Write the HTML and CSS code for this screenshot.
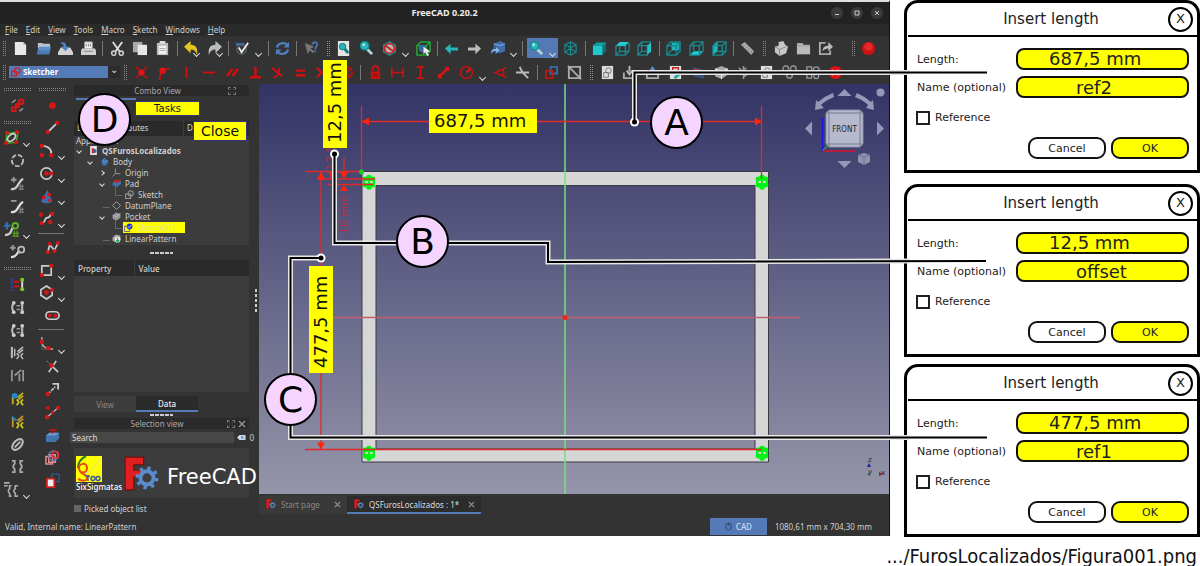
FILE: index.html
```html
<!DOCTYPE html>
<html lang="en">
<head>
<meta charset="utf-8">
<title>FreeCAD 0.20.2</title>
<link rel="stylesheet" href="styles.css">
</head>
<body>
<svg class="sprite" aria-hidden="true">
  <symbol id="new" viewBox="0 0 16 16"><path d="M2 1h9l3 3v11H2z" fill="#e8e8e8"/><path d="M11 1l3 3h-3z" fill="#aaa"/></symbol>
  <symbol id="open" viewBox="0 0 16 16"><path d="M2 2h5l1 1h7v5H2z" fill="#b9c4cf"/><path d="M1 14l2-8h13l-2 8z" fill="#5d8fc9"/><path d="M1 14l1-4h13l-1 4z" fill="#4a79b5"/></symbol>
  <symbol id="save" viewBox="0 0 16 16"><path d="M3 7h10l3 5v3H0v-3z" fill="#d4d4d4"/><path d="M2 2c4-2 7 0 7 4h3l-4 5-5-5h3c0-2-1-3-4-4z" fill="#4f86c6"/></symbol>
  <symbol id="print" viewBox="0 0 16 16"><path d="M4 1h8v7H4z" fill="#f2f2f2" stroke="#aaa"/><path d="M1 8h14l1 3v4H0v-4z" fill="#d2d2d2"/><path d="M3 11h10M6 3v3m2-3v3m2-3v3" stroke="#888"/></symbol>
  <symbol id="cut" viewBox="0 0 16 16"><path d="M3 1l7 10M13 1L6 11" stroke="#ddd" stroke-width="2"/><g fill="none" stroke="#ccc" stroke-width="1.7"><circle cx="4" cy="13" r="2.2"/><circle cx="12" cy="13" r="2.2"/></g></symbol>
  <symbol id="copy" viewBox="0 0 16 16"><path d="M1 1h10v11H1z" fill="#aaa"/><path d="M6 4h10v11H6z" fill="#e6e6e6"/></symbol>
  <symbol id="paste" viewBox="0 0 16 16"><path d="M2 2h12v13H2z" fill="#bbb"/><path d="M5 0h6v3H5z" fill="#ddd"/><path d="M4 5h8v9H4z" fill="#f1f1f1"/><path d="M5 8h6m-6 2h6" stroke="#aaa"/></symbol>
  <symbol id="undo" viewBox="0 0 16 16"><path d="M0 6l7-6v4c6 0 8 4 7 11-1-4-3-6-7-6v4z" fill="#e3c71d"/></symbol>
  <symbol id="redo" viewBox="0 0 16 16"><path d="M16 6L9 0v4c-6 0-8 4-7 11 1-4 3-6 7-6v4z" fill="#b8bdbd"/></symbol>
  <symbol id="check" viewBox="0 0 16 16"><path d="M1 2h9v3H1z" fill="#3a6ea5"/><circle cx="7" cy="9" r="5" fill="none" stroke="#51606c" stroke-width="1.5"/><path d="M4 7l3 5 7-10" fill="none" stroke="#e8e8e8" stroke-width="2"/></symbol>
  <symbol id="refresh" viewBox="0 0 16 16"><path d="M2 7c1-5 8-6 11-3M14 9c-1 5-8 6-11 3" fill="none" stroke="#4e80bd" stroke-width="2.4"/><path d="M15 1v6H9zM1 15V9h6z" fill="#4e80bd"/></symbol>
  <symbol id="help" viewBox="0 0 16 16"><path d="M1 2l3 12 2-4 4 3 1-2-4-3 4-2z" fill="#777"/><path d="M9 4c0-4 6-3 5 0 0 2-2 2-2 5m0 1v2" fill="none" stroke="#4876ad" stroke-width="2"/></symbol>
  <symbol id="fitall" viewBox="0 0 16 16"><path d="M2 0h12v16H2z" fill="#e4e4e4"/><path d="M9 8l4 5" stroke="#137b80" stroke-width="3"/><circle cx="7" cy="6" r="3.5" fill="#25b5bb" stroke="#0f7f84"/></symbol>
  <symbol id="zoomsel" viewBox="0 0 16 16"><path d="M8 8l6 6" stroke="#b7d6d8" stroke-width="3"/><circle cx="6" cy="5" r="4.5" fill="#27b7bd" stroke="#11898e" stroke-width="1.5"/><circle cx="5" cy="4" r="1.5" fill="#b4e7e9"/></symbol>
  <symbol id="nodraw" viewBox="0 0 16 16"><path d="M8 0l7 4v8l-7 4-7-4V4z" fill="#1c8c91"/><circle cx="8" cy="8" r="5.2" fill="#b8b8b8" stroke="#c22" stroke-width="2"/><path d="M4 5l8 6" stroke="#c22" stroke-width="2"/></symbol>
  <symbol id="bbox" viewBox="0 0 16 16"><path d="M1 5l4-4h10v10l-4 4H1zM1 5h10v10M11 5l4-4" fill="none" stroke="#21a634" stroke-width="1.6"/><circle cx="7" cy="8" r="4" fill="#376ba5"/><path d="M8 6l7 5-3 1 2 3-2 1-2-4-2 2z" fill="#eee"/></symbol>
  <symbol id="left" viewBox="0 0 16 16"><path d="M1 8l6-5v4h8v3H7v4z" fill="#28b5b9"/></symbol>
  <symbol id="right" viewBox="0 0 16 16"><path d="M15 8L9 3v4H1v3h8v4z" fill="#bcbcbc"/></symbol>
  <symbol id="linkgo" viewBox="0 0 16 16"><path d="M4 3l7-3 5 3v8l-6 2-6-3z" fill="#426fa8"/><path d="M4 3l6 2 6-2" stroke="#7faee0" fill="none"/><path d="M1 14c0-5 2-6 5-6V5l5 5-5 4v-3c-3 0-3 1-5 3z" fill="#89b6e4" stroke="#2d5689"/></symbol>
  <symbol id="wire" viewBox="0 0 16 16"><path d="M8 1l6 3v8l-6 3-6-3V4zM2 4l6 3 6-3M8 7v8M8 1v6M2 12l6-4 6 4" fill="none" stroke="#178f94" stroke-width="1.2"/></symbol>
  <symbol id="cubef" viewBox="0 0 16 16"><path d="M1 4l4-3h10v10l-4 4H1z" fill="#107276"/><path d="M1 5h10v10H1z" fill="#20c7cd"/><path d="M1 5l4-3h10l-4 3z" fill="#189da2"/></symbol>
  <symbol id="cubet" viewBox="0 0 16 16"><path d="M1 5h10v10H1zM11 15l4-4V2M1 15l4-4h10M5 11V2" fill="none" stroke="#168a8f" stroke-width="1.4"/><path d="M1 5l4-4h10l-4 4z" fill="#22ccd2"/></symbol>
  <symbol id="cuber" viewBox="0 0 16 16"><path d="M1 5h10v10H1zM1 5l4-4h10M1 15l4-4h6M5 11V1" fill="none" stroke="#168a8f" stroke-width="1.4"/><path d="M11 5l4-4v10l-4 4z" fill="#22c4ca"/></symbol>
  <symbol id="cubeb" viewBox="0 0 16 16"><path d="M6 2h8v8H6z" fill="#20b4ba"/><path d="M1 5l4-4h10v10l-4 4H1zM1 5h10v10M11 5l4-4M1 15l5-5" fill="none" stroke="#168a8f" stroke-width="1.5"/></symbol>
  <symbol id="cubed" viewBox="0 0 16 16"><path d="M1 15l4-4h10l-4 4z" fill="#22ccd2"/><path d="M1 5l4-4h10v10l-4 4H1zM1 5h10v10M11 5l4-4M5 1v10" fill="none" stroke="#168a8f" stroke-width="1.4"/></symbol>
  <symbol id="cubel" viewBox="0 0 16 16"><path d="M1 5l5-4v10l-5 4z" fill="#22b6bc"/><path d="M1 5l4-4h10v10l-4 4H1zM1 5h10v10M11 5l4-4M5 11h10" fill="none" stroke="#168a8f" stroke-width="1.4"/></symbol>
  <symbol id="ruler" viewBox="0 0 16 16"><path d="M1 4l4-3 10 10-3 4z" fill="#aaa"/><path d="M5 4l-2 2m5 0L6 8m4 0l-2 3m5-1l-2 3" stroke="#777"/></symbol>
  <symbol id="part" viewBox="0 0 16 16"><path d="M2 6l4-1V1l5-1 2 4 3 2-2 7-7 3-5-4z" fill="#c6c6c6"/><path d="M2 6l5 3 7-3M7 9v6" stroke="#888" fill="none"/></symbol>
  <symbol id="folder" viewBox="0 0 16 16"><path d="M1 2h6l1 2h7v10H1z" fill="#a9a9a9"/><path d="M1 6h14v8H1z" fill="#bababa"/></symbol>
  <symbol id="export" viewBox="0 0 16 16"><path d="M8 2H2v12h11v-4" fill="none" stroke="#aaa" stroke-width="2"/><path d="M5 11c0-5 3-6 6-6V1l5 5-5 5V8c-3 0-4 1-6 3z" fill="#bbb"/></symbol>
  <symbol id="rec" viewBox="0 0 16 16"><circle cx="8" cy="8" r="7" fill="#c91313"/><circle cx="8" cy="6" r="4.5" fill="#e22a2a"/></symbol>
  <symbol id="coinc" viewBox="0 0 16 16"><path d="M2 2l3 3m6 6l3 3m0-12l-3 3m-6 6l-3 3" stroke="#b81212" stroke-width="2"/><circle cx="8" cy="8" r="3.4" fill="#e01414"/></symbol>
  <symbol id="ponobj" viewBox="0 0 16 16"><path d="M3 16c0-8 4-12 11-12" fill="none" stroke="#b31414" stroke-width="2.3"/><circle cx="6" cy="6" r="3.4" fill="#e01414"/></symbol>
  <symbol id="vert" viewBox="0 0 16 16"><path d="M8 2v12" stroke="#cf1010" stroke-width="2"/></symbol>
  <symbol id="horiz" viewBox="0 0 16 16"><path d="M1 8h13" stroke="#cf1010" stroke-width="2"/></symbol>
  <symbol id="paral" viewBox="0 0 16 16"><path d="M2 12l6-8M8 12l6-8" stroke="#cf1010" stroke-width="2.6"/></symbol>
  <symbol id="perp" viewBox="0 0 16 16"><path d="M8 2v11M2 13h12" stroke="#cf1010" stroke-width="2.6"/></symbol>
  <symbol id="tang" viewBox="0 0 16 16"><path d="M2 3l11 9M4 13c5-1 7-5 5-10" fill="none" stroke="#cf1010" stroke-width="2.2"/></symbol>
  <symbol id="equal" viewBox="0 0 16 16"><path d="M3 6h10M3 11h10" stroke="#cf1010" stroke-width="2.6"/></symbol>
  <symbol id="symm" viewBox="0 0 16 16"><path d="M1 3l5 5-5 5M15 3l-5 5 5 5" fill="none" stroke="#cf1010" stroke-width="2.4"/></symbol>
  <symbol id="block" viewBox="0 0 16 16"><path d="M3 3l10 10M13 3L3 13" stroke="#b51212" stroke-width="1.8"/><circle cx="8" cy="8" r="6" fill="none" stroke="#b51212" stroke-width="1.8"/></symbol>
  <symbol id="lock" viewBox="0 0 16 16"><path d="M3 7h10v8H3z" fill="#c71212"/><path d="M5 7V4c0-4 6-4 6 0v3" fill="none" stroke="#c71212" stroke-width="2"/><path d="M5 10h6m-6 2h6" stroke="#8d1010"/></symbol>
  <symbol id="dimh" viewBox="0 0 16 16"><path d="M2 3v10M14 3v10M2 8h12" stroke="#cf1010" stroke-width="1.8"/></symbol>
  <symbol id="dimv" viewBox="0 0 16 16"><path d="M4 2h8M4 14h8M8 2v12" stroke="#cf1010" stroke-width="1.8"/></symbol>
  <symbol id="dist" viewBox="0 0 16 16"><path d="M3 13L13 3" stroke="#e01414" stroke-width="2.6"/><path d="M9 2h5v5zM2 9v5h5z" fill="#e01414"/></symbol>
  <symbol id="radius" viewBox="0 0 16 16"><circle cx="8" cy="8" r="6.3" fill="none" stroke="#c01212" stroke-width="1.7"/><path d="M8 8l4-4" stroke="#e01414" stroke-width="2.4"/></symbol>
  <symbol id="angle" viewBox="0 0 16 16"><path d="M14 3L2 8l12 5M10 5c2 2 2 4 0 6" fill="none" stroke="#c81212" stroke-width="1.7"/></symbol>
  <symbol id="snell" viewBox="0 0 16 16"><path d="M1 8h14M5 2l3 6 6 6" stroke="#bbb" stroke-width="2" fill="none"/></symbol>
  <symbol id="driving" viewBox="0 0 16 16"><path d="M7 2h7v7H7z" fill="none" stroke="#396ba5" stroke-width="2"/><path d="M2 6h7v8H2z" fill="none" stroke="#be1616" stroke-width="2"/></symbol>
  <symbol id="active" viewBox="0 0 16 16"><path d="M2 2h12v12H2zM1 1l14 14" fill="none" stroke="#aaa" stroke-width="2"/></symbol>
  <symbol id="sketch" viewBox="0 0 16 16"><path d="M2 1h12v14H2z" fill="#ddd"/><path d="M4 8h5v5H4z" fill="none" stroke="#777"/><circle cx="9" cy="6" r="3" fill="none" stroke="#777"/></symbol>
  <symbol id="tray" viewBox="0 0 16 16"><path d="M2 8v6h12V8" fill="none" stroke="#aaa" stroke-width="2"/><path d="M8 1v6m-3-1l3 4 3-4" stroke="#bbb" stroke-width="2" fill="none"/></symbol>
  <symbol id="trayup" viewBox="0 0 16 16"><path d="M2 8v6h12V8" fill="none" stroke="#aaa" stroke-width="2"/><path d="M8 1l4 6H4z" fill="#5e91cf"/></symbol>
  <symbol id="view" viewBox="0 0 16 16"><path d="M2 1h12v14H2z" fill="#ddd"/><path d="M5 3h6v5H5z" fill="none" stroke="#c22" stroke-width="1.5"/><path d="M7 14l6-5" stroke="#28a5aa" stroke-width="3"/></symbol>
  <symbol id="map" viewBox="0 0 16 16"><path d="M2 2l12 3v10L2 12z" fill="#32507f"/><path d="M4 5h4v5H4zM9 7h3v4" fill="none" stroke="#c33" stroke-width="1.5"/></symbol>
  <symbol id="reorient" viewBox="0 0 16 16"><path d="M1 4l7-3 7 3v6l-7 5-7-3z" fill="#aaa"/><path d="M1 4l7 3 7-3M8 7v8" stroke="#eee" fill="none"/></symbol>
  <symbol id="validate" viewBox="0 0 16 16"><path d="M1 6h5m2 0h6M8 1v5m0 3v6M3 3l3 3m7 3l-5 4m3-10l-3 3" stroke="#999" stroke-width="1.6"/></symbol>
  <symbol id="merge" viewBox="0 0 16 16"><g fill="none" stroke="#888" stroke-width="1.8"><circle cx="4" cy="4" r="3"/><circle cx="12" cy="4" r="3"/><circle cx="8" cy="11" r="3"/></g></symbol>
  <symbol id="mirror" viewBox="0 0 16 16"><path d="M2 2h5v12H2z" fill="none" stroke="#999" stroke-width="1.4"/><circle cx="12" cy="5" r="3" fill="none" stroke="#999" stroke-width="1.4"/><circle cx="12" cy="12" r="2.5" fill="none" stroke="#999" stroke-width="1.4"/></symbol>
  <symbol id="stop" viewBox="0 0 16 16"><circle cx="8" cy="8" r="7" fill="#dc1111"/><path d="M5 5v6m6-6v6M5 8h6" stroke="#fff" stroke-width="1.6"/></symbol>
  <symbol id="clone" viewBox="0 0 16 16"><path d="M2 5l4-3M10 14l4-3" stroke="#999" stroke-width="1.5"/><g fill="none" stroke="#e01414" stroke-width="2"><circle cx="12" cy="4" r="2.4"/><circle cx="8" cy="8" r="1.8"/><path d="M2 10h4v4H2z"/></g></symbol>
  <symbol id="bspl" viewBox="0 0 16 16"><path d="M3 4l12-2-2 11-11 1z" fill="none" stroke="#43a820" stroke-width="1.6"/><ellipse cx="8" cy="8" rx="5" ry="3" transform="rotate(-40 8 8)" fill="none" stroke="#ccc" stroke-width="2"/><g fill="#e01414"><circle cx="3" cy="3" r="2"/><circle cx="14" cy="2" r="2"/><circle cx="13" cy="13" r="2"/><circle cx="2" cy="14" r="2"/></g></symbol>
  <symbol id="circdash" viewBox="0 0 16 16"><circle cx="8" cy="8" r="6" fill="none" stroke="#bbb" stroke-width="2" stroke-dasharray="5 2"/></symbol>
  <symbol id="degup" viewBox="0 0 16 16"><path d="M1 4h6M4 1v6" stroke="#999" stroke-width="2"/><path d="M1 14c8 1 7-8 13-11" fill="none" stroke="#ccc" stroke-width="2.4"/><path d="M9 11h6m-6 3h6m-4-5v6m2-6v6" stroke="#888"/></symbol>
  <symbol id="degdn" viewBox="0 0 16 16"><path d="M1 2h6" stroke="#999" stroke-width="2"/><path d="M1 14c8 1 7-8 13-11" fill="none" stroke="#ddd" stroke-width="2.4"/><path d="M9 11h6m-6 3h6m-4-5v6m2-6v6" stroke="#888"/></symbol>
  <symbol id="knot" viewBox="0 0 16 16"><path d="M0 4h7M3 0v8" stroke="#3b74b4" stroke-width="2"/><path d="M1 14c7 0 6-5 9-9" fill="none" stroke="#ccc" stroke-width="2.4"/><circle cx="12" cy="4" r="3" fill="none" stroke="#62b327" stroke-width="2"/><path d="M9 12h7m-7 3h7m-5-6v7m3-7v7" stroke="#62b327"/></symbol>
  <symbol id="knot2" viewBox="0 0 16 16"><path d="M0 4h6M3 1v6" stroke="#999" stroke-width="2"/><path d="M1 14c7 0 6-5 9-7" fill="none" stroke="#ddd" stroke-width="2.4"/><circle cx="12" cy="6" r="3.2" fill="none" stroke="#bbb" stroke-width="2"/></symbol>
  <symbol id="assoc" viewBox="0 0 16 16"><path d="M2 1v14" stroke="#2c3f91" stroke-width="3" stroke-dasharray="3 1"/><path d="M4 5h6m-6 5h6" stroke="#d01414" stroke-width="2"/><path d="M13 3v10" stroke="#ddd" stroke-width="2"/><circle cx="13" cy="3" r="2.2" fill="#7ccb25"/><circle cx="13" cy="13" r="2.2" fill="#7ccb25"/></symbol>
  <symbol id="sel1" viewBox="0 0 16 16"><path d="M4 3c-2 3-2 7 0 10M13 3v10" fill="none" stroke="#bbb" stroke-width="2.2"/><path d="M7 6h4m-4 4h4" stroke="#999" stroke-width="1.6"/><g fill="#ccc"><circle cx="4" cy="3" r="2"/><circle cx="4" cy="13" r="2"/><circle cx="13" cy="3" r="2"/><circle cx="13" cy="13" r="2"/></g></symbol>
  <symbol id="sel2" viewBox="0 0 16 16"><path d="M2 2v12" stroke="#bbb" stroke-width="2.2"/><path d="M5 4v8M14 2l-6 5M14 5l-5 4M7 9c3 2 3 3 0 6M14 9c-3 2-3 3 0 6" fill="none" stroke="#bbb" stroke-width="1.6"/></symbol>
  <symbol id="sel3" viewBox="0 0 16 16"><path d="M2 2v12M14 2v12M12 2L5 8m5-2v8" fill="none" stroke="#999" stroke-width="1.8"/></symbol>
  <symbol id="sel4" viewBox="0 0 16 16"><path d="M3 4v10M14 2l-6 5M14 5l-5 4" stroke="#b9ac20" stroke-width="2"/><path d="M7 9c3 2 3 3 0 6M14 9c-3 2-3 3 0 6" fill="none" stroke="#cfc51e" stroke-width="2"/><circle cx="5" cy="5" r="3" fill="#2586cb"/></symbol>
  <symbol id="sel5" viewBox="0 0 16 16"><path d="M3 4v10M14 2l-6 5M14 5l-5 4" stroke="#b9902a" stroke-width="2"/><path d="M7 9c3 2 3 3 0 6M14 9c-3 2-3 3 0 6" fill="none" stroke="#cfc51e" stroke-width="2"/><path d="M2 3l5 4" stroke="#2586cb" stroke-width="2"/></symbol>
  <symbol id="ellip" viewBox="0 0 16 16"><ellipse cx="8" cy="8" rx="7" ry="4" transform="rotate(-45 8 8)" fill="none" stroke="#bbb" stroke-width="2.2"/><path d="M5 11l6-6" stroke="#bbb" stroke-width="2"/></symbol>
  <symbol id="brack" viewBox="0 0 16 16"><path d="M2 2h3v3c-2 2-2 4 0 6v3H2M14 2h-3v3c2 2 2 4 0 6v3h3" fill="none" stroke="#aaa" stroke-width="2"/></symbol>
  <symbol id="brack2" viewBox="0 0 16 16"><path d="M0 1h6M0 4h4M8 4H6v3c-2 2-2 3 0 5v3h2M15 4h-3v3c-2 2-2 3 0 5v3h3" fill="none" stroke="#aaa" stroke-width="1.8"/></symbol>
  <symbol id="point" viewBox="0 0 16 16"><circle cx="8" cy="8" r="3.6" fill="#d81414"/></symbol>
  <symbol id="line" viewBox="0 0 16 16"><path d="M3 13L13 3" stroke="#ccc" stroke-width="2"/><g fill="#d81414"><circle cx="3" cy="13" r="2.3"/><circle cx="13" cy="3" r="2.3"/></g></symbol>
  <symbol id="arc" viewBox="0 0 16 16"><path d="M3 3c7 0 11 4 10 9" fill="none" stroke="#ccc" stroke-width="1.8"/><g fill="#d81414"><circle cx="3" cy="3" r="2.4"/><circle cx="3" cy="13" r="2.4"/><circle cx="13" cy="13" r="2.4"/></g></symbol>
  <symbol id="circle" viewBox="0 0 16 16"><circle cx="8" cy="8" r="6" fill="none" stroke="#ccc" stroke-width="1.8"/><g fill="#d81414"><circle cx="8" cy="8" r="2.4"/><circle cx="13" cy="8" r="2.2"/></g></symbol>
  <symbol id="conic" viewBox="0 0 16 16"><path d="M9 1l5 12c-3 3-9 3-12 0z" fill="#3d6eaa"/><g fill="#d81414"><circle cx="5" cy="9" r="2"/><circle cx="11" cy="6" r="2"/><circle cx="11" cy="12" r="1.6"/></g></symbol>
  <symbol id="bcurve" viewBox="0 0 16 16"><path d="M3 13c5-1 2-6 6-6s2-3 4-4" fill="none" stroke="#ccc" stroke-width="1.8"/><g fill="#d81414"><circle cx="2" cy="4" r="2.3"/><circle cx="3" cy="13" r="2.3"/><circle cx="12" cy="12" r="2.3"/><circle cx="14" cy="3" r="2.3"/></g></symbol>
  <symbol id="poly" viewBox="0 0 16 16"><path d="M3 13l2-8 5 6 4-8" fill="none" stroke="#ccc" stroke-width="1.8"/><g fill="#d81414"><circle cx="3" cy="13" r="2.2"/><circle cx="5" cy="4" r="2"/><circle cx="10" cy="12" r="2.2"/><circle cx="14" cy="3" r="2.2"/></g></symbol>
  <symbol id="rect" viewBox="0 0 16 16"><path d="M3 3h10v10H3z" fill="none" stroke="#ccc" stroke-width="1.8"/><g fill="#d81414"><circle cx="13" cy="3" r="2.3"/><circle cx="3" cy="13" r="2.3"/></g></symbol>
  <symbol id="hex" viewBox="0 0 16 16"><path d="M8 1l6 4v6l-6 4-6-4V5z" fill="none" stroke="#ccc" stroke-width="1.8"/><g fill="#d81414"><circle cx="8" cy="8" r="2.6"/><circle cx="14" cy="5" r="2.2"/></g></symbol>
  <symbol id="slot" viewBox="0 0 16 16"><rect x="1" y="4" width="14" height="8" rx="4" fill="none" stroke="#ccc" stroke-width="1.8"/><g fill="#d81414"><circle cx="5" cy="8" r="2"/><circle cx="11" cy="8" r="2"/></g></symbol>
  <symbol id="fillet" viewBox="0 0 16 16"><path d="M3 0v5c0 5 3 7 12 8" fill="none" stroke="#aaa" stroke-width="1.6"/><path d="M3 6v7h6" fill="none" stroke="#777" stroke-dasharray="2 1"/><g fill="#d81414"><circle cx="3" cy="5" r="2.4"/><circle cx="10" cy="12" r="2.4"/></g></symbol>
  <symbol id="trim" viewBox="0 0 16 16"><path d="M12 2L4 14M7 7l7 7" stroke="#ccc" stroke-width="1.8"/><path d="M2 2l5 5" stroke="#888" stroke-dasharray="2 1"/><circle cx="7" cy="7" r="2.4" fill="#d81414"/></symbol>
  <symbol id="extend" viewBox="0 0 16 16"><path d="M3 13l8-8" stroke="#bbb" stroke-width="1.8" stroke-dasharray="4 1"/><path d="M8 2h6v6" fill="none" stroke="#ccc" stroke-width="2"/><circle cx="3" cy="13" r="2.5" fill="#d81414"/></symbol>
  <symbol id="split" viewBox="0 0 16 16"><path d="M2 13L14 3" stroke="#bbb" stroke-width="1.5"/><g fill="#d81414"><circle cx="2" cy="13" r="2.3"/><circle cx="14" cy="3" r="2.3"/><circle cx="3" cy="3" r="2"/><circle cx="8" cy="8" r="1.8"/></g></symbol>
  <symbol id="extgeo" viewBox="0 0 16 16"><path d="M1 8l4-3h10v6l-4 4H1z" fill="#4474ae"/><path d="M1 8h10l4-3H5z" fill="#6e9bd2"/><path d="M4 2h9M8 1v5" stroke="#c01414" stroke-width="1.6"/></symbol>
  <symbol id="carbon" viewBox="0 0 16 16"><g fill="none" stroke-width="1.6"><path d="M4 5h7v8H4zM1 7h7v8H1z" stroke="#e58b8b"/><circle cx="9" cy="6" r="5" stroke="#6275b5"/><circle cx="11" cy="5" r="3.5" stroke="#d33"/></g></symbol>
  <symbol id="constr" viewBox="0 0 16 16"><path d="M7 1h8v8H7z" fill="none" stroke="#2e5fa0" stroke-width="1.6" stroke-dasharray="3 1"/><path d="M2 6h8v9H2z" fill="#eee" stroke="#c22" stroke-width="2"/></symbol>
  <symbol id="logo" viewBox="0 0 32 32"><path d="M1 1h17v7H9v5h7v6H9v12H1z" fill="#e02020" stroke="#6c1010"/><g fill="none" stroke="#5a8ccc"><circle cx="21" cy="20" r="6" stroke-width="3.6"/><circle cx="21" cy="20" r="9" stroke-width="3" stroke-dasharray="3.1 3.970"/></g></symbol>
  <symbol id="docic" viewBox="0 0 16 16"><path d="M2 0h12v16H2z" fill="#e5e5e5"/><path d="M5 4h4v9H5z" fill="#d22"/><circle cx="10" cy="9" r="3.5" fill="#3668a5"/></symbol>
  <symbol id="body" viewBox="0 0 16 16"><path d="M3 6l2-3 4-2 1 3 4 2v6l-6 4-5-3z" fill="#3f73b2"/><path d="M3 6l5 3 6-3" stroke="#87b1e2" fill="none"/></symbol>
  <symbol id="origin" viewBox="0 0 16 16"><path d="M6 1v9h9M6 10l-5 5" fill="none" stroke="#999" stroke-width="1.6"/></symbol>
  <symbol id="pad" viewBox="0 0 16 16"><path d="M1 7l7-5 8 2v5l-7 5-8-3z" fill="#3f73b2"/><path d="M1 5l7-4 8 2-7 4z" fill="#c92222"/></symbol>
  <symbol id="sk" viewBox="0 0 16 16"><path d="M1 7h9v8H1z" fill="none" stroke="#999" stroke-width="1.8"/><circle cx="10" cy="6" r="4.6" fill="none" stroke="#999" stroke-width="1.8"/></symbol>
  <symbol id="skblue" viewBox="0 0 16 16"><path d="M1 6h9v9H1z" fill="none" stroke="#777" stroke-width="1.8"/><circle cx="10" cy="6" r="5" fill="#1734d8"/><path d="M7 6l2 2 4-4" stroke="#fff" stroke-width="1.5" fill="none"/></symbol>
  <symbol id="plane" viewBox="0 0 16 16"><path d="M8 1l7 7-7 7-7-7z" fill="none" stroke="#aaa" stroke-width="1.6"/></symbol>
  <symbol id="pocket" viewBox="0 0 16 16"><path d="M1 6l6-5 8 2v7l-7 5-7-3z" fill="#999"/><path d="M1 6l7 2 7-5" stroke="#ccc" fill="none"/></symbol>
  <symbol id="linpat" viewBox="0 0 16 16"><path d="M1 6l6-5 8 2v7l-7 5-7-3z" fill="#aaa"/><circle cx="10" cy="10" r="5" fill="#eee"/><path d="M10 6v8m-3-3l3 3 3-3" stroke="#13b13c" stroke-width="2" fill="none"/></symbol>
  <symbol id="float" viewBox="0 0 16 16"><path d="M1 5V1h4M11 1h4v4M15 11v4h-4M5 15H1v-4M5 5h1m4 0h1M5 11h1m4 0h1" fill="none" stroke="#888" stroke-width="2"/></symbol>
  <symbol id="x" viewBox="0 0 16 16"><path d="M2 2l12 12M14 2L2 14" stroke="currentColor" stroke-width="2.4"/></symbol>
  <symbol id="dots" viewBox="0 0 20 20"><g fill="#00f413"><circle cx="10" cy="5.5" r="2.8"/><circle cx="10" cy="15" r="2.8"/><circle cx="6" cy="7" r="2.4"/><circle cx="14" cy="7" r="2.4"/><circle cx="6" cy="13" r="2.4"/><circle cx="14" cy="13" r="2.4"/><path d="M6 6h8v3H6zM6 11h8v3H6z"/><path d="M4 8h2v4H4zM14 8h2v4h-2zM9 8h2v4H9z"/></g></symbol>
</svg>

<div class="page">
<div class="app">
  <header class="titlebar"><h1>FreeCAD 0.20.2</h1>
    <div class="winbtns">
      <button aria-label="Minimize"><svg viewBox="0 0 12 12"><path d="M4 7.500h4" stroke="#ccc"/></svg></button>
      <button aria-label="Maximize"><svg viewBox="0 0 12 12"><path d="M4 4h4v4H4z" fill="none" stroke="#ccc"/></svg></button>
      <button aria-label="Close window"><svg viewBox="0 0 12 12"><path d="M4 4l4 4m0-4L4 8" stroke="#ccc"/></svg></button>
    </div>
  </header>
  <nav class="menubar">
    <button><u>F</u>ile</button><button><u>E</u>dit</button><button><u>V</u>iew</button><button><u>T</u>ools</button><button><u>M</u>acro</button><button><u>S</u>ketch</button><button><u>W</u>indows</button><button><u>H</u>elp</button>
  </nav>
  <div class="toolbar">
    <i class="grip first"></i>
    <button class="tb" aria-label="New"><svg><use href="#new"/></svg></button>
    <button class="tb" aria-label="Open"><svg><use href="#open"/></svg></button>
    <button class="tb" aria-label="Save"><svg><use href="#save"/></svg></button>
    <button class="tb" aria-label="Print"><svg><use href="#print"/></svg></button>
    <i class="sep"></i>
    <button class="tb" aria-label="Cut"><svg><use href="#cut"/></svg></button>
    <button class="tb" aria-label="Copy"><svg><use href="#copy"/></svg></button>
    <button class="tb" aria-label="Paste"><svg><use href="#paste"/></svg></button>
    <i class="sep"></i>
    <button class="tb menu" aria-label="Undo"><svg><use href="#undo"/></svg></button>
    <button class="tb menu" aria-label="Redo"><svg><use href="#redo"/></svg></button>
    <i class="sep"></i>
    <button class="tb wide menu" aria-label="Edit mode"><svg><use href="#check"/></svg></button>
    <i class="sep"></i>
    <button class="tb" aria-label="Refresh"><svg><use href="#refresh"/></svg></button>
    <i class="sep"></i>
    <button class="tb" aria-label="What's this"><svg><use href="#help"/></svg></button>
    <i class="grip"></i>
    <button class="tb" aria-label="Fit all"><svg><use href="#fitall"/></svg></button>
    <button class="tb" aria-label="Fit selection"><svg><use href="#zoomsel"/></svg></button>
    <button class="tb wide menu" aria-label="Draw style"><svg><use href="#nodraw"/></svg></button>
    <button class="tb" aria-label="Bounding box"><svg><use href="#bbox"/></svg></button>
    <i class="sep"></i>
    <button class="tb" aria-label="Back"><svg><use href="#left"/></svg></button>
    <button class="tb" aria-label="Forward"><svg><use href="#right"/></svg></button>
    <button class="tb wide menu" aria-label="Go to linked object"><svg><use href="#linkgo"/></svg></button>
    <i class="sep"></i>
    <button class="tb wide menu on" aria-label="Zoom"><svg><use href="#zoomsel"/></svg></button>
    <button class="tb" aria-label="Isometric"><svg><use href="#wire"/></svg></button>
    <i class="sep"></i>
    <button class="tb" aria-label="Front"><svg><use href="#cubef"/></svg></button>
    <button class="tb" aria-label="Top"><svg><use href="#cubet"/></svg></button>
    <button class="tb" aria-label="Right"><svg><use href="#cuber"/></svg></button>
    <i class="sep"></i>
    <button class="tb" aria-label="Rear"><svg><use href="#cubeb"/></svg></button>
    <button class="tb" aria-label="Bottom"><svg><use href="#cubed"/></svg></button>
    <button class="tb" aria-label="Left"><svg><use href="#cubel"/></svg></button>
    <i class="sep"></i>
    <button class="tb" aria-label="Measure"><svg><use href="#ruler"/></svg></button>
    <i class="grip"></i>
    <button class="tb" aria-label="Part"><svg><use href="#part"/></svg></button>
    <button class="tb" aria-label="Group"><svg><use href="#folder"/></svg></button>
    <button class="tb" aria-label="Link"><svg><use href="#export"/></svg></button>
    <i class="grip far"></i>
    <button class="tb" aria-label="Record macro"><svg><use href="#rec"/></svg></button>
  </div>
  <div class="toolbar">
    <i class="grip first"></i>
    <label class="bench"><svg viewBox="0 0 16 16"><path d="M1 7h8v7H1z" fill="none" stroke="#c22" stroke-width="2"/><circle cx="10" cy="6" r="4.500" fill="none" stroke="#c22" stroke-width="2"/></svg><select aria-label="Workbench"><option>Sketcher</option></select></label>
    <i class="grip"></i>
    <button class="tb" aria-label="Coincident"><svg><use href="#coinc"/></svg></button>
    <button class="tb" aria-label="Point on object"><svg><use href="#ponobj"/></svg></button>
    <button class="tb" aria-label="Vertical"><svg><use href="#vert"/></svg></button>
    <button class="tb" aria-label="Horizontal"><svg><use href="#horiz"/></svg></button>
    <button class="tb" aria-label="Parallel"><svg><use href="#paral"/></svg></button>
    <button class="tb" aria-label="Perpendicular"><svg><use href="#perp"/></svg></button>
    <button class="tb" aria-label="Tangent"><svg><use href="#tang"/></svg></button>
    <button class="tb" aria-label="Equal"><svg><use href="#equal"/></svg></button>
    <button class="tb" aria-label="Symmetric"><svg><use href="#symm"/></svg></button>
    <button class="tb" aria-label="Block"><svg><use href="#block"/></svg></button>
    <i class="sep"></i>
    <button class="tb" aria-label="Lock"><svg><use href="#lock"/></svg></button>
    <button class="tb" aria-label="Horizontal distance"><svg><use href="#dimh"/></svg></button>
    <button class="tb" aria-label="Vertical distance"><svg><use href="#dimv"/></svg></button>
    <button class="tb" aria-label="Distance"><svg><use href="#dist"/></svg></button>
    <button class="tb wide menu" aria-label="Radius"><svg><use href="#radius"/></svg></button>
    <button class="tb" aria-label="Angle"><svg><use href="#angle"/></svg></button>
    <button class="tb" aria-label="Refraction"><svg><use href="#snell"/></svg></button>
    <i class="sep"></i>
    <button class="tb" aria-label="Toggle driving"><svg><use href="#driving"/></svg></button>
    <button class="tb" aria-label="Toggle active"><svg><use href="#active"/></svg></button>
    <i class="grip"></i>
    <button class="tb" aria-label="New sketch"><svg><use href="#sketch"/></svg></button>
    <button class="tb" aria-label="Edit sketch"><svg><use href="#tray"/></svg></button>
    <button class="tb" aria-label="Leave sketch"><svg><use href="#trayup"/></svg></button>
    <button class="tb" aria-label="View sketch"><svg><use href="#view"/></svg></button>
    <button class="tb" aria-label="View section"><svg><use href="#map"/></svg></button>
    <button class="tb" aria-label="Map sketch"><svg><use href="#reorient"/></svg></button>
    <button class="tb" aria-label="Reorient"><svg><use href="#validate"/></svg></button>
    <button class="tb" aria-label="Validate"><svg><use href="#sketch"/></svg></button>
    <button class="tb" aria-label="Merge"><svg><use href="#merge"/></svg></button>
    <button class="tb" aria-label="Mirror"><svg><use href="#mirror"/></svg></button>
    <button class="tb" aria-label="Stop operation"><svg><use href="#stop"/></svg></button>
    <i class="spare"></i>
  </div>

  <div class="work">
    <div class="side">
      <i class="hgrip"></i>
      <button class="tb" aria-label="Clone"><svg><use href="#clone"/></svg></button>
      <i class="hgrip"></i>
      <button class="tb menu" aria-label="Show B-spline"><svg><use href="#bspl"/></svg></button>
      <button class="tb" aria-label="Convert"><svg><use href="#circdash"/></svg></button>
      <button class="tb" aria-label="Increase degree"><svg><use href="#degup"/></svg></button>
      <button class="tb" aria-label="Decrease degree"><svg><use href="#degdn"/></svg></button>
      <button class="tb menu" aria-label="Knot"><svg><use href="#knot"/></svg></button>
      <button class="tb" aria-label="Insert knot"><svg><use href="#knot2"/></svg></button>
      <i class="hgrip"></i>
      <button class="tb" aria-label="Degrees of freedom"><svg><use href="#assoc"/></svg></button>
      <button class="tb" aria-label="Select constraints"><svg><use href="#sel1"/></svg></button>
      <button class="tb" aria-label="Select elements"><svg><use href="#sel1"/></svg></button>
      <button class="tb" aria-label="Redundant"><svg><use href="#sel2"/></svg></button>
      <button class="tb" aria-label="Conflicting"><svg><use href="#sel3"/></svg></button>
      <button class="tb" aria-label="Show geometry"><svg><use href="#sel4"/></svg></button>
      <button class="tb" aria-label="Hide geometry"><svg><use href="#sel5"/></svg></button>
      <button class="tb" aria-label="Ellipse"><svg><use href="#ellip"/></svg></button>
      <button class="tb" aria-label="Symmetry"><svg><use href="#brack"/></svg></button>
      <button class="tb menu" aria-label="Clone array"><svg><use href="#brack2"/></svg></button>
    </div>
    <div class="side second">
      <i class="hgrip"></i>
      <button class="tb" aria-label="Point"><svg><use href="#point"/></svg></button>
      <button class="tb" aria-label="Line"><svg><use href="#line"/></svg></button>
      <button class="tb menu" aria-label="Arc"><svg><use href="#arc"/></svg></button>
      <button class="tb menu" aria-label="Circle"><svg><use href="#circle"/></svg></button>
      <button class="tb menu" aria-label="Conic"><svg><use href="#conic"/></svg></button>
      <button class="tb menu" aria-label="B-spline"><svg><use href="#bcurve"/></svg></button>
      <i class="hsep"></i>
      <button class="tb" aria-label="Polyline"><svg><use href="#poly"/></svg></button>
      <button class="tb menu" aria-label="Rectangle"><svg><use href="#rect"/></svg></button>
      <button class="tb menu" aria-label="Polygon"><svg><use href="#hex"/></svg></button>
      <button class="tb" aria-label="Slot"><svg><use href="#slot"/></svg></button>
      <i class="hsep"></i>
      <button class="tb menu" aria-label="Fillet"><svg><use href="#fillet"/></svg></button>
      <button class="tb" aria-label="Trim"><svg><use href="#trim"/></svg></button>
      <button class="tb" aria-label="Extend"><svg><use href="#extend"/></svg></button>
      <button class="tb" aria-label="Split"><svg><use href="#split"/></svg></button>
      <button class="tb" aria-label="External geometry"><svg><use href="#extgeo"/></svg></button>
      <button class="tb" aria-label="Carbon copy"><svg><use href="#carbon"/></svg></button>
      <button class="tb" aria-label="Construction"><svg><use href="#constr"/></svg></button>
    </div>

    <aside class="dock">
      <div class="dockhead"><span>Combo View</span><svg><use href="#float"/></svg></div>
      <div class="modeltab"></div>
      <div class="treehead"><span>Labels &amp; Attributes</span><span>Description</span></div>
      <ul class="tree">
        <li class="l0">Application</li>
        <li class="l1"><b class="ar"></b><svg><use href="#docic"/></svg><strong>QSFurosLocalizados</strong></li>
        <li class="l2"><b class="ar"></b><svg><use href="#body"/></svg>Body</li>
        <li class="l3"><b class="ar shut"></b><svg><use href="#origin"/></svg>Origin</li>
        <li class="l3"><b class="ar"></b><svg><use href="#pad"/></svg>Pad</li>
        <li class="l4 twig"><svg><use href="#sk"/></svg>Sketch</li>
        <li class="l3 twig"><b class="ar none"></b><svg><use href="#plane"/></svg>DatumPlane</li>
        <li class="l3"><b class="ar"></b><svg><use href="#pocket"/></svg>Pocket</li>
        <li class="l4 twig"><span class="picked"><svg><use href="#skblue"/></svg>Sketch001</span></li>
        <li class="l3 twig"><b class="ar none"></b><svg><use href="#linpat"/></svg>LinearPattern</li>
      </ul>
      <i class="hsplit"></i>
      <table class="props"><thead><tr><th>Property</th><th>Value</th></tr></thead><tbody><tr><td colspan="2"></td></tr></tbody></table>
      <div class="proptabs"><button>View</button><button class="sel">Data</button></div>
      <i class="hsplit low"></i>
      <div class="dockhead"><span>Selection view</span><svg><use href="#float"/></svg><svg><use href="#x"/></svg></div>
      <div class="search"><input type="text" placeholder="Search" aria-label="Search"><svg viewBox="0 0 18 12"><path d="M5 1h12v10H5L0 6z" fill="#c9dbef"/><path d="M8 4l5 4m0-4L8 8" stroke="#4476b5" stroke-width="2"/></svg><span>0</span></div>
      <div class="brand">
        <figure class="six"><svg viewBox="0 0 26 26"><path d="M0 0h26v26H0z" fill="#ff0"/><path d="M10 0C4 3 2 7 2 12" fill="none" stroke="#2a7a2a" stroke-width="2"/><path d="M3 12c0 6 8 6 8 0s-8-5-8 0c0 7 10 6 8 11-2 3-7 1-9 0" fill="none" stroke="#e44a12" stroke-width="2"/><path d="M10 17C17 15 20 8 25 2" fill="none" stroke="#ddd6b0"/><g fill="none" stroke="#2d55a8" stroke-width="1.300"><path d="M10 20h4m-2 0v5"/><circle cx="17" cy="22.500" r="2"/><circle cx="22" cy="22.500" r="2"/></g></svg><figcaption>SixSigmatas</figcaption></figure>
        <svg class="flogo"><use href="#logo"/></svg><span class="fname">FreeCAD</span>
      </div>
      <label class="pick"><input type="checkbox">Picked object list</label>
    </aside>
    <i class="vsplit"></i>

    <main class="center">
      <div class="view">
        <svg width="631" height="410" viewBox="259 84 631 410">
          <path d="M362 171.500h406.500v290.500H362zM376 185.500v263.500h379V185.500z" fill="#d6d6d6" fill-rule="evenodd" stroke="#3a3a42"/>
          <path d="M565 84v410" stroke="#73e07f" stroke-width="1.500"/>
          <path d="M333 317.500h467" stroke="#bf5f70" stroke-width="1.300"/>
          <circle cx="565" cy="317.500" r="2.500" fill="#f52410"/>
          <use href="#dots" x="359" y="172" width="20" height="20"/><use href="#dots" x="752" y="172" width="20" height="20"/>
          <use href="#dots" x="359" y="443" width="20" height="20"/><use href="#dots" x="752" y="443" width="20" height="20"/>
          <g stroke="#e02a2a" stroke-width="1.300" fill="none"><path d="M361.500 106v66M761.500 106v73M362 121.500h400M305 171.500h57M317 179h58M328 184.500h45M321 172v278M344 158v20M344 186v5M305 449.500h457M331 172v7"/></g>
          <g fill="#ff240a"><path d="M362 121.500l7-4v8zM762 121.500l-7-4v8zM321 172l-4 7h8zM321 449.500l-4-7h8zM344 179l-4-7h8zM344 185l-4 6h8zM332 180l-3-8h4z"/></g>
          <circle cx="361.500" cy="172" r="2.500" fill="#13d41c"/>
          <g class="dimtext"><text transform="translate(348 234) rotate(-90)">10 mm</text><text transform="translate(334 170) rotate(-90)">12,5</text></g>
          <g fill="#9797b8"><path d="M844.500 89l7 7h-14zM844.500 168l-7-7h14zM805 128.500l7-7v14zM884 128.500l-7-7v14z"/><circle cx="880.500" cy="92.500" r="4"/><path d="M815 110l1-10 2 2q7-6 15-9l1 4q-8 3-13 8l3 3zM874 110l-1-10-2 2q-7-6-14-9l-2 4q8 3 13 8l-2 3z"/></g>
          <path d="M829 110h31l3 3v31l-3 3h-31l-3-3v-31z" fill="#b7b9cf" stroke="#8c8da5"/>
          <path d="M829 113h31v31h-31zM826 113h3v-3M863 113h-3v-3M826 144h3v3M863 144h-3v3" fill="none" stroke="#77788d"/>
          <text class="front" x="844.500" y="132">FRONT</text>
          <path d="M822.500 118v32" stroke="#1717f2" stroke-width="1.500"/><path d="M823 151h32" stroke="#dd1230" stroke-width="1.500"/><path d="M823 150l6-5" stroke="#35c455"/>
          <path d="M864 153l6 2v7l-6 3-6-3v-7z" fill="#9191ad"/><path d="M858 155l6 2 6-2M864 157v8" fill="none" stroke="#6e6e90"/><path d="M873 158h6l-3 3z" fill="#444468"/>
          <path d="M867 467l2-4 2 4z" fill="#22228f"/><path d="M879 472l4 2-4 2z" fill="#902020"/><circle cx="868.500" cy="474" r="1" fill="#1f7a2f"/>
          <g class="axes"><text x="868" y="462">z</text><text x="868" y="474">y</text><text x="881" y="475">x</text></g>
        </svg>
      </div>
      <div class="doctabs">
        <div class="doctab"><svg><use href="#logo"/></svg><span>Start page</span><button aria-label="Close Start page"><svg><use href="#x"/></svg></button></div>
        <div class="doctab cur"><svg><use href="#logo"/></svg><span>QSFurosLocalizados : 1*</span><button aria-label="Close document"><svg><use href="#x"/></svg></button></div>
      </div>
    </main>
  </div>
  <footer class="status"><span>Valid, Internal name: LinearPattern</span><button><svg viewBox="0 0 8 10"><rect x="1" y="1" width="6" height="8" rx="3" fill="none" stroke="#26405f"/><path d="M4 1v3" stroke="#26405f"/></svg>CAD</button><span class="coords">1080,61 mm x 704,30 mm</span></footer>
</div>

<div class="dialogs">
  <form class="dlg"><div class="dtitle"><h2>Insert length</h2><button type="button" class="dx" aria-label="Close">X</button></div>
    <div class="fields"><label for="l1">Length:</label><input id="l1" class="len" value="687,5 mm"><label for="n1">Name (optional)</label><input id="n1" class="nam" value="ref2"></div>
    <label class="ref"><input type="checkbox">Reference</label>
    <div class="acts"><button type="button">Cancel</button><button type="button" class="ok">OK</button></div></form>
  <form class="dlg"><div class="dtitle"><h2>Insert length</h2><button type="button" class="dx" aria-label="Close">X</button></div>
    <div class="fields"><label for="l2">Length:</label><input id="l2" class="len" value="12,5 mm"><label for="n2">Name (optional)</label><input id="n2" class="nam" value="offset"></div>
    <label class="ref"><input type="checkbox">Reference</label>
    <div class="acts"><button type="button">Cancel</button><button type="button" class="ok">OK</button></div></form>
  <form class="dlg"><div class="dtitle"><h2>Insert length</h2><button type="button" class="dx" aria-label="Close">X</button></div>
    <div class="fields"><label for="l3">Length:</label><input id="l3" class="len" value="477,5 mm"><label for="n3">Name (optional)</label><input id="n3" class="nam" value="ref1"></div>
    <label class="ref"><input type="checkbox">Reference</label>
    <div class="acts"><button type="button">Cancel</button><button type="button" class="ok">OK</button></div></form>
</div>
<p class="caption">.../FurosLocalizados/Figura001.png</p>
</div>

<div class="notes">
  <span class="tag t687">687,5 mm</span>
  <span class="tag up t12">12,5 mm</span>
  <span class="tag up t477">477,5 mm</span>
  <span class="tag small tasks">Tasks</span>
  <span class="tag mid close">Close</span>
  <svg class="leaders" width="1200" height="566" viewBox="0 0 1200 566">
    <g fill="none" stroke="#e8e8e8" stroke-width="5"><path d="M634.500 122V72.500H910"/><path d="M334.500 154v89H548v19l362-1"/><path d="M321 258h-30.500v179.500H910"/></g>
    <g fill="#fff"><circle cx="634.500" cy="122" r="4.500"/><circle cx="334.500" cy="154" r="4.500"/><circle cx="321" cy="258" r="4.500"/></g>
    <g fill="none" stroke="#000" stroke-width="2"><path d="M634.500 122V72.500H987"/><path d="M334.500 154v89H548v19l438-1"/><path d="M321 258h-30.500v179.500H987"/></g>
    <g fill="#000"><circle cx="634.500" cy="122" r="2.500"/><circle cx="334.500" cy="154" r="2.500"/><circle cx="321" cy="258" r="2.500"/></g>
  </svg>
  <span class="ball ba">A</span><span class="ball bb">B</span><span class="ball bc">C</span><span class="ball bd">D</span>
</div>
</body>
</html>
```
FILE: styles.css
```css
* { box-sizing: border-box; }
body { margin: 0; background: #fff; font-family: "DejaVu Sans", sans-serif; position: relative; }
button, input, select { font: inherit; color: inherit; margin: 0; padding: 0; border: 0; background: none; }
h1, h2, p, ul, figure { margin: 0; padding: 0; }
.sprite { display: none; }
.page { display: grid; grid-template-columns: 1fr 296px; column-gap: 14px; }

.app { background: #333; color: #d0d0d0; font: 8px/11px "Noto Sans", sans-serif; border-top: 2px solid #dde3dc; border-right: 1px solid #111; display: flex; flex-direction: column; align-self: start; min-width: 0; }
.titlebar { display: grid; grid-template-columns: 1fr auto 1fr; align-items: center; height: 22px; background: #222; }
.titlebar h1 { grid-column: 2; font-size: 9px; line-height: 12px; color: #eee; }
.winbtns { display: flex; justify-content: flex-end; gap: 8px; padding-right: 6px; }
.winbtns button { width: 12px; height: 12px; border-radius: 50%; background: #3a3a3a; }
.winbtns svg { display: block; }
.menubar { display: flex; gap: 8px; padding: 0 5px; height: 12px; background: #2a2a2a; }
.menubar button { line-height: 11px; height: 11px; }
.toolbar { display: flex; height: 24px; padding-right: 9px; }
.grip { flex: 10 0 0; display: flex; justify-content: center; align-items: center; }
.grip::before { content: ""; width: 4px; height: 17px; }
.grip::before, .hgrip::before { background: linear-gradient(90deg, #333 1px, transparent 1px) 0 0 / 2px 2px, linear-gradient(#333 1px, #888 1px) 0 0 / 2px 2px; }
.grip.first { flex-grow: 9; }
.grip.far { flex-grow: 20; }
.grip.far::before { margin-left: 12px; }
.sep { flex: 6 0 0; display: flex; justify-content: center; align-items: center; }
.sep::before { content: ""; width: 1px; height: 15px; background: #777; }
.spare { flex: 34 0 0; }
.tb { flex: 23 0 0; min-width: 0; display: flex; justify-content: center; align-items: center; position: relative; }
.tb svg { width: 15px; height: 15px; flex: none; }
.toolbar .tb.wide { padding-right: 11px; }
.tb.menu::after { content: ""; position: absolute; right: 4px; bottom: 4px; width: 4px; height: 4px; border: solid #ddd; border-width: 0 1px 1px 0; transform: rotate(45deg); }
.tb.on::before { content: ""; position: absolute; inset: 2px 1px; background: #5479b5; z-index: 0; }
.tb.on svg { z-index: 1; }
.bench { flex: 112 0 0; display: flex; align-items: center; align-self: center; height: 12px; background: #547ab8; }
.bench svg { width: 10px; height: 10px; margin-left: 2px; flex: none; }
.bench select { appearance: none; flex: 1; min-width: 0; height: 12px; padding-left: 2px; font-weight: bold; color: #fff; line-height: 12px; }
.bench::after { content: "⌄"; width: 12px; height: 12px; background: #2b2b2b; color: #ddd; font-size: 10px; line-height: 7px; text-align: center; }

.work { display: flex; height: 432px; }
.side { width: 28px; margin-left: 3px; display: flex; flex-direction: column; padding-bottom: 15px; flex: none; }
.side.second { margin-left: 7px; padding-bottom: 24px; }
.side .tb.menu { padding-right: 12px; }
.side .tb.menu::after { right: 2px; bottom: 3px; }
.hgrip { flex: 10 0 0; display: flex; align-items: center; justify-content: center; }
.hgrip::before { content: ""; width: 28px; height: 4px; }
.hsep { flex: 6 0 0; display: flex; align-items: center; }
.hsep::before { content: ""; width: 26px; height: 1px; background: #777; }

.dock { width: 175px; margin-left: 8px; flex: none; display: flex; flex-direction: column; padding-top: 1px; }
.dockhead { display: flex; align-items: center; justify-content: flex-end; gap: 3px; height: 11px; flex: none; background: #2a2a2a; color: #a8a8a8; padding-right: 3px; }
.dockhead:first-child { padding-right: 13px; }
.dockhead span { flex: 1; text-align: center; padding-left: 16px; }
.dockhead svg { width: 8px; height: 8px; color: #999; }
.modeltab { width: 60px; height: 23px; margin: 2px 0 0 2px; border-top: 2px solid #547ab8; flex: none; }
.treehead { display: grid; grid-template-columns: 110px 1fr; height: 15px; flex: none; background: #2a2a2a; line-height: 14px; }
.treehead span { padding-left: 3px; overflow: hidden; white-space: nowrap; }
.treehead span:first-child { border-right: 1px solid #3c3c3c; }
.tree { list-style: none; background: #3c3c3c; height: 109px; flex: none; overflow: hidden; }
.tree li { display: flex; align-items: center; height: 11px; white-space: nowrap; }
.tree svg { width: 9px; height: 9px; margin-right: 4px; flex: none; }
.tree .l0 { padding-left: 2px; height: 9px; }
.tree .l1 { padding-left: 3px; }
.tree .l2 { padding-left: 14px; }
.tree .l3 { padding-left: 26px; }
.tree .l4 { padding-left: 50px; }
.ar { width: 4px; height: 4px; border: solid #ddd; border-width: 0 1px 1px 0; transform: rotate(45deg); margin-right: 8px; flex: none; }
.ar.shut { transform: rotate(-45deg); }
.ar.none { width: 7px; margin: 0 2px 0 3px; transform: none; border-width: 0 0 1px 0; border-color: #666; }
.l4.twig::before { content: ""; width: 6px; height: 8px; margin: -6px 3px 0 -9px; border: solid #666; border-width: 0 0 1px 1px; }
.picked { display: flex; align-items: center; width: 62px; height: 11px; background: #ff0; color: #e6e68a; padding-left: 1px; margin-left: -2px; }
.hsplit { height: 15px; flex: none; display: flex; align-items: center; justify-content: center; }
.hsplit::before { content: ""; width: 23px; height: 2px; background: repeating-linear-gradient(90deg, #ccc 0 4px, transparent 4px 5px); }
.hsplit.low { height: 6px; }
.props { border-collapse: collapse; width: 100%; background: #3c3c3c; table-layout: fixed; }
.props th { height: 16px; padding: 0 4px; text-align: left; font-weight: 500; background: #2a2a2a; }
.props th:first-child { width: 60px; border-right: 1px solid #3c3c3c; }
.props td { height: 116px; padding: 0; }
.proptabs { display: flex; margin-top: 4px; height: 16px; flex: none; }
.proptabs button { width: 62px; background: #3c3c3c; color: #888; }
.proptabs .sel { background: #2b2b2b; color: #eee; border-bottom: 2px solid #547ab8; font-weight: 500; }
.search { display: flex; align-items: center; gap: 3px; margin: 3px -5px 5px -4px; flex: none; }
.search input { flex: 1; min-width: 0; height: 11px; background: #484848; padding-left: 2px; }
.search input::placeholder { color: #ddd; opacity: 1; }
.search svg { width: 9px; height: 7px; }
.brand { height: 50px; flex: none; background: #3c3c3c; display: flex; align-items: center; white-space: nowrap; }
.six { width: 50px; padding-left: 2px; color: #fff; font-weight: 500; line-height: 9px; }
.six svg { width: 26px; height: 26px; display: block; }
.flogo { width: 35px; height: 35px; margin: 0 8px 0 2px; flex: none; }
.fname { font: 21px/24px "DejaVu Sans", sans-serif; color: #fff; padding-top: 8px; }
.pick { display: flex; align-items: center; gap: 3px; margin-top: 5px; height: 11px; }
.pick input { appearance: none; width: 7px; height: 7px; background: #666; }
.vsplit { width: 10px; flex: none; display: flex; align-items: center; justify-content: flex-end; padding-right: 2px; }
.vsplit::before { content: ""; width: 2px; height: 23px; background: repeating-linear-gradient(#ccc 0 3px, transparent 3px 5px); }

.center { flex: 1; min-width: 0; display: flex; flex-direction: column; }
.view { flex: 1; min-height: 0; background: linear-gradient(#333366, #9595aa); overflow: hidden; }
.view svg { display: block; }
.dimtext text { font: 11px "DejaVu Sans", sans-serif; fill: #b52f45; }
.front { font: 8px "DejaVu Sans Condensed", sans-serif; text-anchor: middle; fill: #24242c; }
.axes text { font: 7px "DejaVu Sans", sans-serif; fill: #222238; }
.doctabs { display: flex; height: 22px; padding: 2px 0; flex: none; }
.doctab { display: flex; align-items: center; background: #393939; color: #888; padding: 0 6px 0 7px; gap: 5px; width: 88px; border-bottom: 2px solid #393939; }
.doctab.cur { background: #2c2c2c; color: #ddd; border-color: #547ab8; width: 134px; }
.doctab svg { width: 10px; height: 10px; flex: none; }
.doctab span { flex: 1; white-space: nowrap; }
.doctab button { display: flex; color: #999; }
.doctab button svg { width: 7px; height: 7px; }
.status { display: flex; align-items: center; height: 20px; padding-left: 5px; padding-right: 17px; }
.status span:first-child { flex: 1; }
.status button { display: flex; align-items: center; justify-content: center; gap: 4px; width: 57px; height: 17px; background: #547ab8; color: #cfdaec; font-weight: 500; }
.status svg { width: 7px; height: 9px; }
.coords { padding-left: 8px; }

.dialogs { display: flex; flex-direction: column; gap: 11px; padding-bottom: 1px; }
.dlg { border: 3px solid #000; border-radius: 14px 14px 0 0; height: 173px; font-size: 11px; color: #222; display: flex; flex-direction: column; }
.dlg + .dlg + .dlg { margin-top: -4px; }
.dtitle { display: flex; align-items: center; height: 34px; margin-left: 1px; border-bottom: 2px solid #000; padding-right: 4px; flex: none; }
.dtitle h2 { flex: 1; font-size: 15px; font-weight: normal; text-align: center; padding-left: 26px; }
.dx { width: 25px; height: 25px; border: 2px solid #000; border-radius: 50%; font-size: 13px; line-height: 20px; }
.fields { display: grid; grid-template-columns: 99px 1fr; row-gap: 6px; align-items: center; padding: 11px 8px 0 10px; }
.fields input { height: 22px; width: 100%; border: 2px solid #111; border-radius: 8px; background: #ff0; font-size: 18px; line-height: 18px; color: #222; }
.fields .len { padding: 0 0 2px 31px; }
.fields .nam { padding-left: 58px; }
.ref { display: flex; align-items: center; gap: 5px; margin: 12px 0 0 9px; height: 15px; }
.ref input { appearance: none; width: 14px; height: 14px; border: 2px solid #222; }
.acts { display: flex; justify-content: flex-end; gap: 5px; padding-right: 8px; margin-top: 12px; }
.acts button { width: 78px; height: 22px; border: 2px solid #111; border-radius: 9px; }
.acts .ok { background: #ff0; }
.caption { grid-column: 1 / -1; text-align: right; font: 20px/24px "DejaVu Sans Condensed", sans-serif; color: #111; padding: 6px 3px 0 0; }

.notes { position: absolute; inset: 0; pointer-events: none; overflow: hidden; color: #111; }
.leaders { position: absolute; left: 0; top: 0; }
.tag { position: absolute; background: #ff0; font-size: 18px; line-height: 24px; padding: 0 5px; white-space: nowrap; }
.up { writing-mode: vertical-rl; transform: rotate(180deg); padding: 5px 0; }
.t687 { left: 429px; top: 109px; width: 108px; }
.t12 { left: 323px; top: 60px; height: 88px; width: 24px; }
.t477 { left: 309px; top: 266px; height: 107px; width: 24px; }
.small, .mid { border: 1px solid #33337a; text-align: center; }
.small { font-size: 10px; line-height: 13px; }
.mid { font-size: 14px; line-height: 18px; }
.tasks { left: 135px; top: 101px; width: 65px; }
.close { left: 193px; top: 121px; width: 54px; }
.ball { position: absolute; width: 53px; height: 53px; border: 2px solid #000; border-radius: 50%; background: #f5d5ff; font-size: 36px; line-height: 50px; text-align: center; color: #000; }
.ba { left: 650px; top: 96px; }
.bb { left: 396px; top: 215px; }
.bc { left: 264px; top: 373px; }
.bd { left: 78px; top: 93px; }
```
